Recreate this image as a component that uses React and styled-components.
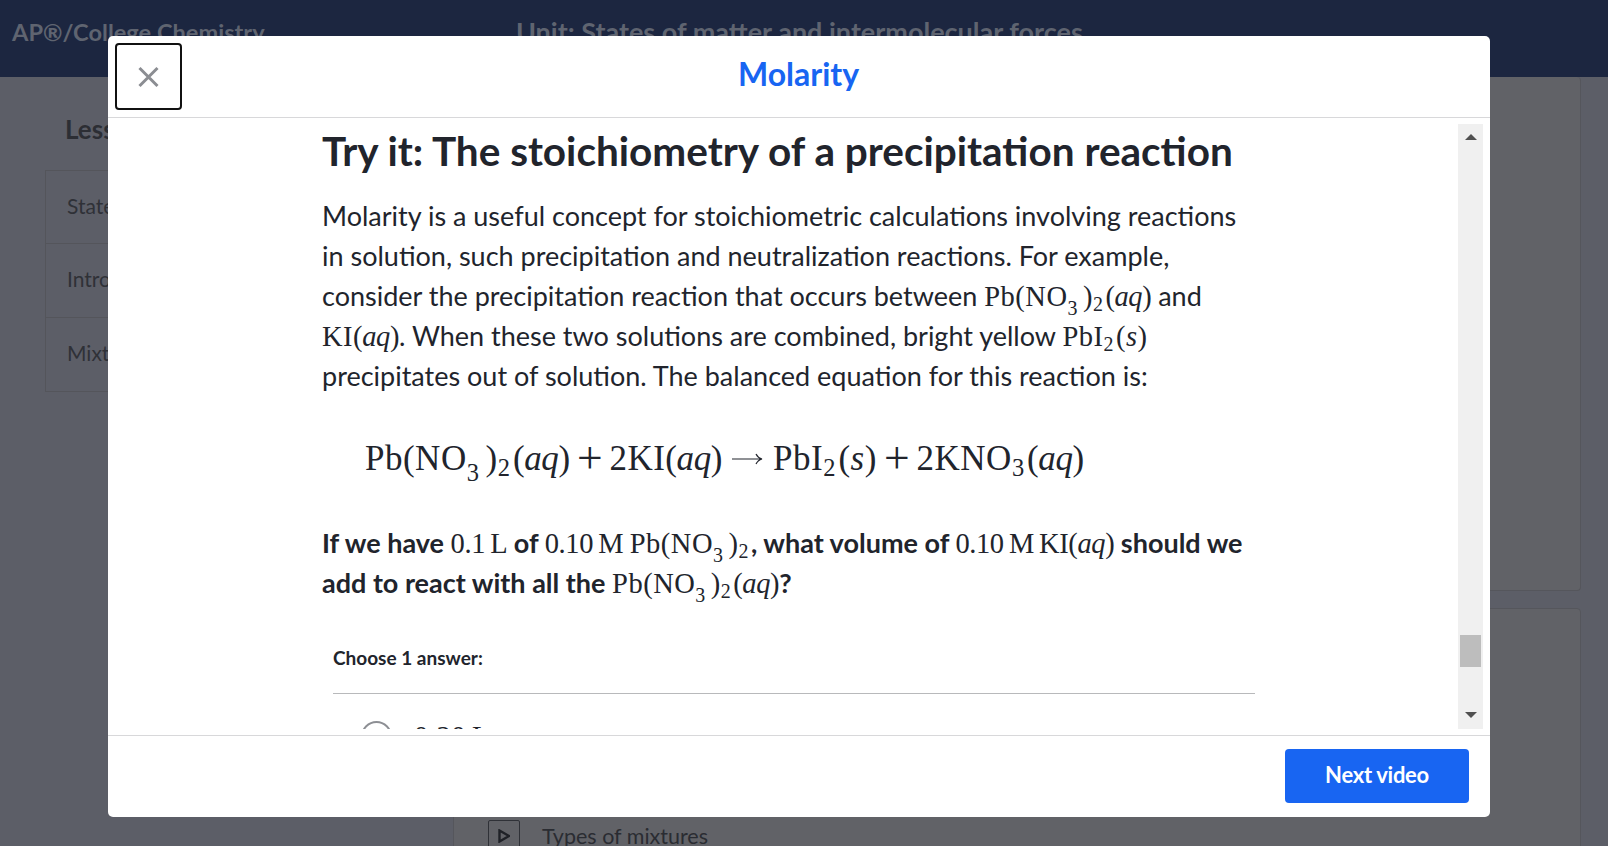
import styled, { createGlobalStyle } from 'styled-components';

const GlobalStyle = createGlobalStyle`
  html, body {
    margin: 0;
    padding: 0;
    height: 100%;
    overflow: hidden;
    background: #5c5e67;
    font-family: Lato, "Noto Sans", sans-serif;
  }
`;

const Page = styled.div`
  position: relative;
  width: 1608px;
  height: 846px;
  overflow: hidden;
  background: #5c5e67;
  color: #33353b;
`;

const TopBar = styled.div`
  height: 77px;
  background: #1c2640;
  display: flex;
  color: #5f6470;
  font-weight: 700;
  line-height: 64px;
  white-space: nowrap;
`;

const Crumb = styled.div`
  padding-left: 12px;
  width: 504px;
  font-size: 23.6px;
`;

const UnitName = styled.div`
  font-size: 27px;
`;

const Behind = styled.div`
  display: flex;
  height: 769px;
`;

const Sidebar = styled.div`
  width: 453px;
  padding: 36px 0 0 45px;
  box-sizing: border-box;
  flex: none;
`;

const SideTitle = styled.div`
  font-size: 26px;
  font-weight: 700;
  color: #2c2e34;
  height: 57px;
  line-height: 32px;
  padding-left: 20px;
`;

const SideList = styled.div`
  border: 1px solid #54555b;
  width: 360px;
`;

const SideRow = styled.div`
  height: 73px;
  line-height: 70px;
  padding-left: 21px;
  font-size: 21px;
  color: #2f3137;
  &:first-child {
    height: 72px;
  }
  & + & {
    border-top: 1px solid #54555b;
  }
`;

const MainColumn = styled.div`
  width: 1128px;
  display: flex;
  flex-direction: column;
  gap: 17px;
`;

const Panel = styled.div`
  flex: none;
  background: #616267;
  border: 1px solid #55565c;
  border-top: ${(p) => (p.$first ? 'none' : '1px solid #55565c')};
  border-radius: 4px;
  height: ${(p) => p.$height}px;
  box-sizing: border-box;
`;

const VideoRow = styled.div`
  display: flex;
  align-items: center;
  gap: 22px;
  padding: 211px 0 0 34px;
  font-size: 21.5px;
  color: #2a2c32;
`;

const PlayBox = styled.div`
  width: 32px;
  height: 32px;
  box-sizing: border-box;
  border: 1px solid #2f3137;
  border-radius: 2px;
  display: flex;
  align-items: center;
  justify-content: center;
  flex: none;
`;

const Modal = styled.div`
  position: absolute;
  left: 108px;
  top: 36px;
  width: 1382px;
  height: 781px;
  background: #fff;
  border-radius: 5px;
  display: flex;
  flex-direction: column;
  overflow: hidden;
`;

const ModalHeader = styled.div`
  height: 81px;
  flex: none;
  border-bottom: 1px solid #d8d8da;
  display: flex;
  align-items: center;
  justify-content: center;
  position: relative;
`;

const CloseButton = styled.button`
  position: absolute;
  left: 7px;
  top: 7px;
  width: 67px;
  height: 67px;
  background: #fff;
  border: 2px solid #111;
  border-radius: 4px;
  padding: 0;
  display: flex;
  align-items: center;
  justify-content: center;
`;

const ModalTitle = styled.h2`
  margin: 0 1px 6px 0;
  font-size: 32px;
  font-weight: 700;
  line-height: 40px;
  color: #1865f2;
`;

const ModalBody = styled.div`
  flex: 1;
  min-height: 0;
  display: flex;
  border-bottom: 1px solid #d8d8da;
  padding: 6px 7px 6px 0;
`;

const Scroller = styled.div`
  flex: 1;
  min-width: 0;
  overflow: hidden;
  padding: 3px 0 0 214px;
  color: #21242c;
`;

const Heading = styled.h1`
  margin: 0;
  font-size: 40.5px;
  line-height: 48px;
  font-weight: 700;
  white-space: nowrap;
`;

const Paragraph = styled.p`
  margin: ${(p) => p.$gap}px 0 0;
  font-size: 27px;
  line-height: 40px;
  white-space: nowrap;
  font-weight: ${(p) => (p.$bold ? 700 : 400)};
`;

const Math = styled.span`
  font-family: "Liberation Serif", serif;
  font-weight: 400;
  font-size: ${(p) => p.$size || 28.5}px;
  line-height: 0;
  letter-spacing: ${(p) => (p.$tight ? -0.4 : 0.5)}px;
  word-spacing: -1.5px;
`;

const Var = styled.i`
  font-style: italic;
`;

const Sub = styled.span`
  font-size: 0.7em;
  line-height: 0;
  vertical-align: ${(p) => (p.$low ? '-0.45em' : '-0.25em')};
  margin-right: ${(p) => (p.$low ? '0.25em' : '0.1em')};
`;

const Equation = styled.div`
  margin: 39px 0 0 43px;
  line-height: 48px;
  white-space: nowrap;
  display: flex;
  align-items: baseline;
`;

const Op = styled.span`
  display: inline-block;
  font-family: "Liberation Serif", serif;
  font-size: 35px;
  margin: 0 10px;
  transform: scale(1.3);
`;

const ArrowIcon = styled.svg`
  margin: 0 10px;
  flex: none;
  align-self: center;
`;

const Prompt = styled.div`
  margin: 43px 0 0 11px;
  font-size: 19px;
  font-weight: 700;
  line-height: 24px;
`;

const Rule = styled.div`
  margin: 23px 0 0 11px;
  width: 922px;
  border-top: 1px solid #b8b9bb;
`;

const Choice = styled.div`
  display: flex;
  align-items: center;
  gap: 22px;
  margin: 27px 0 0 39px;
`;

const Radio = styled.div`
  width: 31px;
  height: 31px;
  box-sizing: border-box;
  border-radius: 50%;
  border: 2px solid #8d8f94;
`;

const Track = styled.div`
  width: 25px;
  background: #f0f0f0;
  display: flex;
  flex-direction: column;
  align-items: center;
  flex: none;
`;

const Arrow = styled.div`
  width: 0;
  height: 0;
  border-left: 6px solid transparent;
  border-right: 6px solid transparent;
  margin: ${(p) => (p.$down ? '0 0 11px' : '10px 0 0')};
  border-bottom: ${(p) => (p.$down ? 'none' : '6px solid #505050')};
  border-top: ${(p) => (p.$down ? '6px solid #505050' : 'none')};
`;

const Thumb = styled.div`
  width: 21px;
  height: 32px;
  background: #bdbdbd;
  margin-top: auto;
  margin-bottom: 45px;
`;

const ModalFooter = styled.div`
  height: 81px;
  box-sizing: border-box;
  flex: none;
  display: flex;
  align-items: center;
  justify-content: flex-end;
  padding: 0 21px 2px 0;
`;

const NextButton = styled.button`
  width: 184px;
  height: 54px;
  background: #1865f2;
  color: #fff;
  border: none;
  border-radius: 4px;
  font-family: Lato, sans-serif;
  font-size: 22px;
  font-weight: 700;
  letter-spacing: -0.3px;
  padding: 0 0 2px;
`;

const PbNO3 = ({ size }) => (
  <Math $size={size}>
    Pb(NO<Sub $low>3</Sub>)<Sub>2</Sub>
  </Math>
);

const Aq = ({ size }) => (
  <Math $size={size} $tight>
    (<Var>aq</Var>)
  </Math>
);

export default function App() {
  return (
    <Page>
      <GlobalStyle />
      <TopBar>
        <Crumb>AP®/College Chemistry</Crumb>
        <UnitName>Unit: States of matter and intermolecular forces</UnitName>
      </TopBar>
      <Behind>
        <Sidebar>
          <SideTitle>Lessons</SideTitle>
          <SideList>
            <SideRow>States of matter</SideRow>
            <SideRow>Intro</SideRow>
            <SideRow>Mixtures</SideRow>
          </SideList>
        </Sidebar>
        <MainColumn>
          <Panel $first $height={514} />
          <Panel $height={300}>
            <VideoRow>
              <PlayBox>
                <svg width="12" height="14" viewBox="0 0 12 14">
                  <path d="M1.5 1.5 L11 7 L1.5 12.5 Z" fill="none" stroke="#1f2127" strokeWidth="2.4" />
                </svg>
              </PlayBox>
              Types of mixtures
            </VideoRow>
          </Panel>
        </MainColumn>
      </Behind>

      <Modal>
        <ModalHeader>
          <CloseButton aria-label="Close">
            <svg width="24" height="24" viewBox="0 0 24 24">
              <path d="M2.5 3 L20.5 21 M20.5 3 L2.5 21" stroke="#8b8d92" strokeWidth="3" fill="none" />
            </svg>
          </CloseButton>
          <ModalTitle>Molarity</ModalTitle>
        </ModalHeader>
        <ModalBody>
          <Scroller>
            <Heading>Try it: The stoichiometry of a precipitation reaction</Heading>
            <Paragraph $gap={21}>
              Molarity is a useful concept for stoichiometric calculations involving reactions
              <br />
              in solution, such precipitation and neutralization reactions. For example,
              <br />
              consider the precipitation reaction that occurs between <PbNO3 /><Aq /> and
              <br />
              <Math>KI</Math><Aq />. When these two solutions are combined, bright yellow{' '}
              <Math>PbI<Sub>2</Sub>(<Var>s</Var>)</Math>
              <br />
              precipitates out of solution. The balanced equation for this reaction is:
            </Paragraph>
            <Equation>
              <PbNO3 size={35} /><Aq size={35} />
              <Op>+</Op>
              <Math $size={35}>2KI</Math><Aq size={35} />
              <ArrowIcon width="31" height="14" viewBox="0 0 31 14">
                <path d="M0 7 H30 M24 2 Q26 6 30 7 Q26 8 24 12" stroke="#21242c" strokeWidth="1.2" fill="none" />
              </ArrowIcon>
              <Math $size={35}>PbI<Sub>2</Sub>(<Var>s</Var>)</Math>
              <Op>+</Op>
              <Math $size={35}>2KNO<Sub>3</Sub></Math><Aq size={35} />
            </Equation>
            <Paragraph $bold $gap={40}>
              If we have <Math $tight>0.1 L</Math> of <Math $tight>0.10 M</Math> <PbNO3 />, what volume of{' '}
              <Math $tight>0.10 M KI</Math><Aq /> should we
              <br />
              add to react with all the <PbNO3 /><Aq />?
            </Paragraph>
            <Prompt>Choose 1 answer:</Prompt>
            <Rule />
            <Choice>
              <Radio />
              <Math>0.20 L</Math>
            </Choice>
          </Scroller>
          <Track>
            <Arrow />
            <Thumb />
            <Arrow $down />
          </Track>
        </ModalBody>
        <ModalFooter>
          <NextButton>Next video</NextButton>
        </ModalFooter>
      </Modal>
    </Page>
  );
}
